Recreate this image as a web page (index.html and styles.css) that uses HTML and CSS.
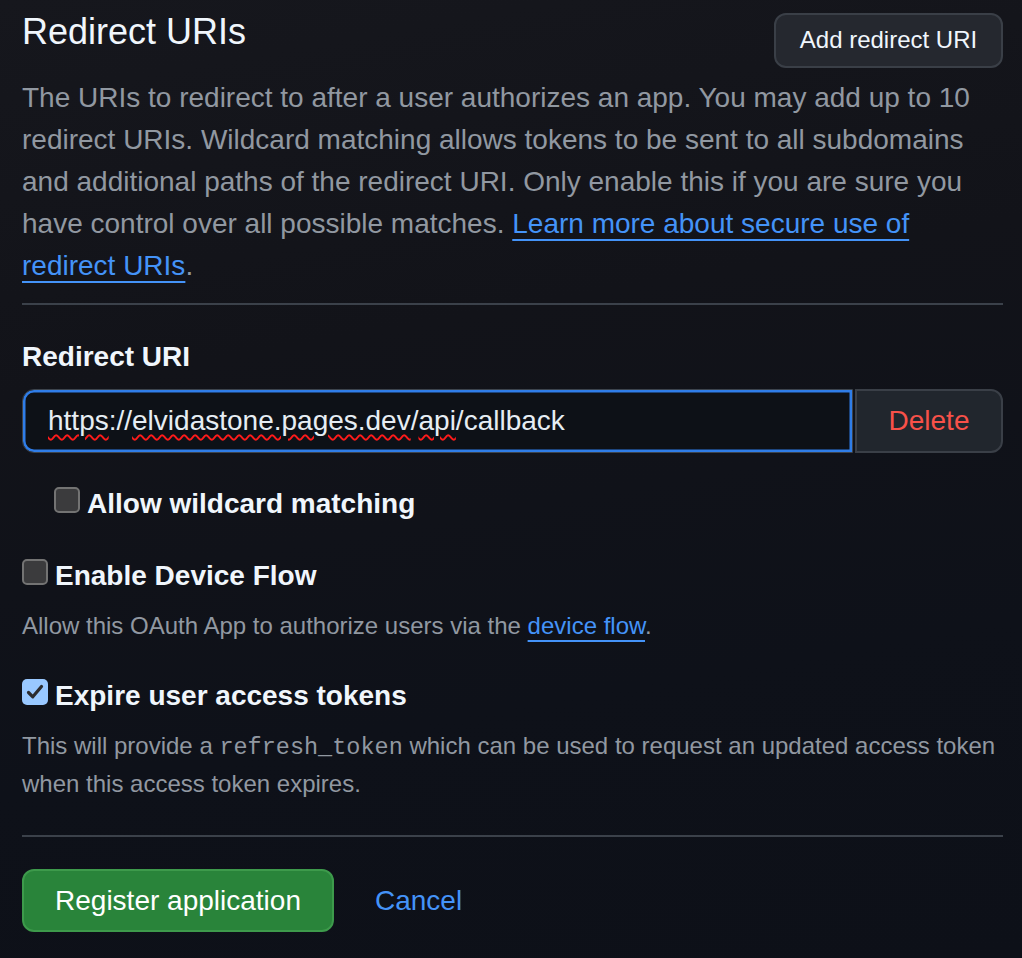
FILE: index.html
```html
<!DOCTYPE html>
<html lang="en">
<head>
<meta charset="utf-8">
<title>Redirect URIs</title>
<link rel="stylesheet" href="styles.css">
</head>
<body>
<main class="page">
  <div class="header">
    <h2 class="title">Redirect URIs</h2>
    <button class="btn btn-add" type="button">Add redirect URI</button>
  </div>
  <p class="description">The URIs to redirect to after a user authorizes an app. You may add up to 10 redirect URIs. Wildcard matching allows tokens to be sent to all subdomains and additional paths of the redirect URI. Only enable this if you are sure you have control over all possible matches. <a class="link" href="#">Learn more about secure use of redirect URIs</a>.</p>
  <hr class="divider">
  <div class="label">Redirect URI</div>
  <div class="input-row">
    <div class="uri-input"><span class="misspelled">https</span>://<span class="misspelled">elvidastone.pages.dev</span>/<span class="misspelled">api</span>/callback</div>
    <button class="btn btn-delete" type="button">Delete</button>
  </div>
  <div class="check-row indent">
    <span class="checkbox"></span>
    <span class="check-label">Allow wildcard matching</span>
  </div>
  <div class="check-row spaced">
    <span class="checkbox"></span>
    <span class="check-label">Enable Device Flow</span>
  </div>
  <p class="note note-device">Allow this OAuth App to authorize users via the <a class="link" href="#">device flow</a>.</p>
  <div class="check-row spaced-expire">
    <span class="checkbox checked"><svg viewBox="0 0 26 26" width="26" height="26"><path d="M6.5 13.5 L10.8 17.8 L19.5 7.5" fill="none" stroke="#2b2b2e" stroke-width="3.2" stroke-linecap="round" stroke-linejoin="round"/></svg></span>
    <span class="check-label">Expire user access tokens</span>
  </div>
  <p class="note note-expire">This will provide a <code class="code">refresh_token</code> which can be used to request an updated access token when this access token expires.</p>
  <hr class="divider divider-bottom">
  <div class="actions">
    <button class="btn btn-primary" type="button">Register application</button>
    <a class="cancel" href="#">Cancel</a>
  </div>
</main>
</body>
</html>
```

FILE: styles.css
```css
html, body {
  margin: 0;
  padding: 0;
}

body {
  min-height: 958px;
  background: linear-gradient(170deg, #16171d 0%, #121319 35%, #0e1119 70%, #0d1018 100%);
  font-family: "Liberation Sans", Arial, sans-serif;
  color: #f0f6fc;
}

.page {
  padding: 0 19px 0 22px;
}

.header {
  display: flex;
  justify-content: space-between;
  align-items: flex-start;
  padding-top: 10px;
}

.title {
  margin: 0;
  font-size: 36px;
  font-weight: 400;
  line-height: 44px;
  color: #f0f6fc;
}

.btn {
  font-family: "Liberation Sans", Arial, sans-serif;
  cursor: pointer;
}

.btn-add {
  margin-top: 3px;
  height: 55px;
  width: 229px;
  padding: 0 0 2px;
  font-size: 24px;
  color: #f0f6fc;
  background: #25282f;
  border: 2px solid #3a3f47;
  border-radius: 12px;
}

.description {
  margin: 9px 0 0;
  font-size: 28px;
  line-height: 42px;
  color: #9198a1;
}

.link {
  color: #4493f8;
  text-decoration: underline;
  text-decoration-thickness: 2px;
  text-underline-offset: 6px;
}

.divider {
  margin: 16px 0 0;
  height: 2px;
  border: 0;
  background: #3b414a;
}

.label {
  margin-top: 31px;
  font-size: 28px;
  font-weight: 700;
  line-height: 42px;
  color: #f0f6fc;
}

.input-row {
  display: flex;
  margin-top: 11px;
  height: 64px;
}

.uri-input {
  flex: 1;
  box-sizing: border-box;
  height: 64px;
  padding-left: 25px;
  display: flex;
  align-items: center;
  white-space: pre;
  font-size: 28px;
  color: #e6edf3;
  background: #0d1117;
  border: 1px solid #3d444d;
  border-radius: 12px 0 0 12px;
  box-shadow: inset 0 0 0 2.5px #2f7de8;
}

.misspelled {
  text-decoration: underline wavy #ff1a1a;
  text-decoration-thickness: 2px;
  text-underline-offset: 4px;
}

.btn-delete {
  width: 148px;
  height: 64px;
  margin-left: 2px;
  padding: 0;
  font-size: 28px;
  color: #f85149;
  background: #21262d;
  border: 2px solid #3a3f47;
  border-radius: 0 12px 12px 0;
}

.check-row {
  display: flex;
  align-items: flex-start;
  gap: 7px;
}

.indent {
  margin-top: 30px;
  padding-left: 32px;
}

.spaced {
  margin-top: 30px;
}

.spaced-expire {
  margin-top: 31px;
}

.checkbox {
  box-sizing: border-box;
  flex: none;
  width: 26px;
  height: 26px;
  margin-top: 4px;
  background: #3b3b3d;
  border: 2px solid #737373;
  border-radius: 5px;
}

.checkbox.checked {
  margin-top: 4px;
  background: #99c8ff;
  border: 0;
  display: flex;
}

.check-label {
  font-size: 28px;
  font-weight: 700;
  line-height: 42px;
  color: #f0f6fc;
}

.note {
  margin: 11px 0 0;
  font-size: 24px;
  line-height: 36px;
  color: #9198a1;
}

.note-expire {
  margin-top: 10px;
  line-height: 37.5px;
}

.code {
  font-family: "Liberation Mono", "DejaVu Sans Mono", monospace;
  font-size: 23.5px;
  line-height: 1;
  color: #9198a1;
}

.divider-bottom {
  margin-top: 33px;
}

.actions {
  display: flex;
  align-items: center;
  margin-top: 32px;
  gap: 41px;
}

.btn-primary {
  width: 312px;
  height: 63px;
  padding: 0;
  font-size: 28px;
  color: #ffffff;
  background: #29843a;
  border: 2px solid #3d9a4b;
  border-radius: 12px;
}

.cancel {
  font-size: 28px;
  color: #4493f8;
  text-decoration: none;
}
```
